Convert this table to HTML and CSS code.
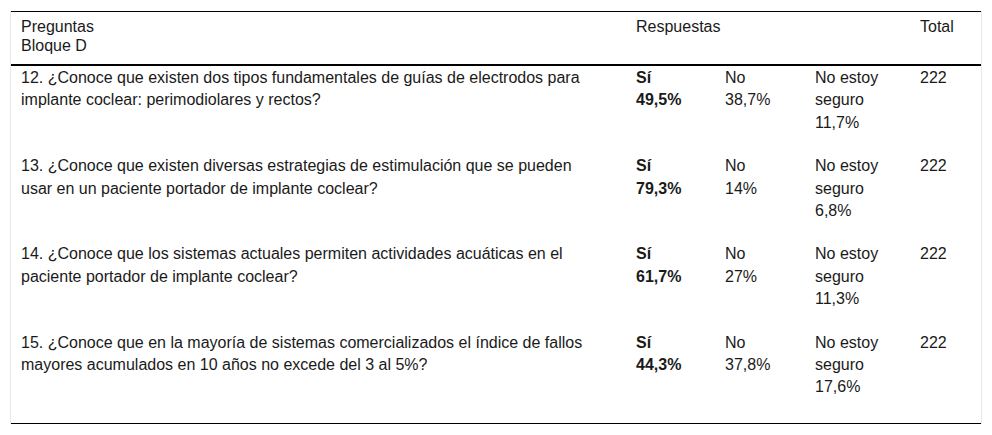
FILE: index.html
```html
<!DOCTYPE html>
<html lang="es">
<head>
<meta charset="utf-8">
<link rel="stylesheet" href="styles.css">
</head>
<body>
<div class="wrap">
  <div class="frame">
    <table class="tbl">
      <colgroup>
        <col class="c-q">
        <col class="c-si">
        <col class="c-no">
        <col class="c-ns">
        <col class="c-t">
      </colgroup>
      <thead>
        <tr>
          <th>Preguntas<br>Bloque D</th>
          <th colspan="3">Respuestas</th>
          <th>Total</th>
        </tr>
      </thead>
      <tbody>
        <tr>
          <td class="q">12. ¿Conoce que existen dos tipos fundamentales de guías de electrodos para implante coclear: perimodiolares y rectos?</td>
          <td><b>Sí<br>49,5%</b></td>
          <td>No<br>38,7%</td>
          <td>No estoy seguro<br>11,7%</td>
          <td>222</td>
        </tr>
        <tr>
          <td class="q">13. ¿Conoce que existen diversas estrategias de estimulación que se pueden usar en un paciente portador de implante coclear?</td>
          <td><b>Sí<br>79,3%</b></td>
          <td>No<br>14%</td>
          <td>No estoy seguro<br>6,8%</td>
          <td>222</td>
        </tr>
        <tr>
          <td class="q">14. ¿Conoce que los sistemas actuales permiten actividades acuáticas en el paciente portador de implante coclear?</td>
          <td><b>Sí<br>61,7%</b></td>
          <td>No<br>27%</td>
          <td>No estoy seguro<br>11,3%</td>
          <td>222</td>
        </tr>
        <tr class="last">
          <td class="q">15. ¿Conoce que en la mayoría de sistemas comercializados el índice de fallos mayores acumulados en 10 años no excede del 3 al 5%?</td>
          <td><b>Sí<br>44,3%</b></td>
          <td>No<br>37,8%</td>
          <td>No estoy seguro<br>17,6%</td>
          <td>222</td>
        </tr>
      </tbody>
    </table>
  </div>
</div>
</body>
</html>
```

FILE: styles.css
```css
html, body {
  margin: 0;
  padding: 0;
  background: #fff;
}
body {
  font-family: "Liberation Sans", Arial, sans-serif;
  font-size: 16px;
  color: #1a1a1a;
}
.wrap {
  padding: 11px 10px 0 10px;
}
.frame {
  border-left: 1px solid #e8e8e8;
  border-right: 1px solid #e8e8e8;
}
.tbl {
  width: 100%;
  border-collapse: collapse;
  table-layout: fixed;
  border-top: 1px solid #000;
  border-bottom: 1px solid #000;
}
.c-q { width: 615px; }
.c-si { width: 89px; }
.c-no { width: 90px; }
.c-ns { width: 105px; }
.c-t { width: auto; }
.tbl th {
  font-weight: normal;
  text-align: left;
  vertical-align: top;
  line-height: 19px;
  padding: 5px 10px 9px 10px;
  border-bottom: 2px solid #000;
}
.tbl td {
  vertical-align: top;
  line-height: 22.4px;
  padding: 1px 10px 20px 10px;
}
.tbl td.q {
  padding-right: 40px;
}
.tbl tr.last td {
  padding-bottom: 24px;
}
.tbl b {
  font-weight: bold;
}
```
